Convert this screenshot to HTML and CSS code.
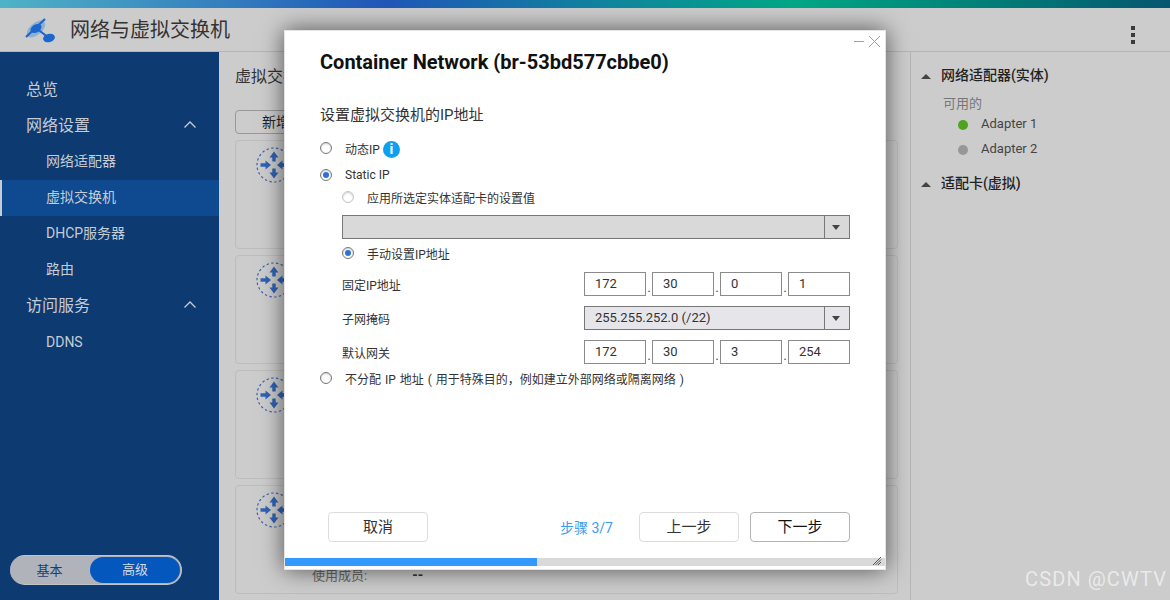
FILE: index.html
```html
<!DOCTYPE html>
<html lang="en">
<head>
  <meta charset="UTF-8">
  <title>网络与虚拟交换机</title>
  <link rel="stylesheet" href="styles.css">
</head>
<body>

  <div class="top-strip"></div>

  <header class="app-header">
    <svg class="app-logo" width="32" height="28" viewBox="0 0 32 28">
      <ellipse cx="13" cy="13" rx="11" ry="6" fill="#8fb0d0" transform="rotate(-40 13 13)"/>
      <path d="M3 21 L22 3" stroke="#1c66cc" stroke-width="2.2"/>
      <path d="M13 12 L26 22" stroke="#1c66cc" stroke-width="2.2"/>
      <ellipse cx="13" cy="12.5" rx="6" ry="4" fill="#1c66cc" transform="rotate(-30 13 12.5)"/>
      <ellipse cx="26" cy="22" rx="6" ry="4.2" fill="#1c66cc" transform="rotate(-15 26 22)"/>
    </svg>
    <div class="app-title">网络与虚拟交换机</div>
    <div class="kebab"><i></i><i></i><i></i></div>
  </header>

  <div class="app-body">
    <nav class="sidebar">
      <ul class="nav-list">
        <li class="nav-top">总览</li>
        <li class="nav-top">网络设置
          <svg class="chev" width="12" height="7" viewBox="0 0 12 7"><path d="M0.5 6.5 L6 1 L11.5 6.5" fill="none" stroke="#c6ccd6" stroke-width="1.3"/></svg>
        </li>
        <li class="nav-sub">网络适配器</li>
        <li class="nav-sub active">虚拟交换机</li>
        <li class="nav-sub">DHCP服务器</li>
        <li class="nav-sub">路由</li>
        <li class="nav-top">访问服务
          <svg class="chev" width="12" height="7" viewBox="0 0 12 7"><path d="M0.5 6.5 L6 1 L11.5 6.5" fill="none" stroke="#c6ccd6" stroke-width="1.3"/></svg>
        </li>
        <li class="nav-sub latin">DDNS</li>
      </ul>
      <div class="mode-switch">
        <span class="mode-item">基本</span>
        <span class="mode-item on">高级</span>
      </div>
    </nav>

    <main class="content">
      <div class="content-title">虚拟交换机</div>
      <div class="add-btn">新增</div>
      <div class="switch-card"><svg class="router-icon" viewBox="0 0 36 36"><use href="#router"/></svg></div>
      <div class="switch-card"><svg class="router-icon" viewBox="0 0 36 36"><use href="#router"/></svg></div>
      <div class="switch-card"><svg class="router-icon" viewBox="0 0 36 36"><use href="#router"/></svg></div>
      <div class="switch-card last">
        <svg class="router-icon" viewBox="0 0 36 36"><use href="#router"/></svg>
        <div class="member-row"><span>使用成员:</span><b>--</b></div>
      </div>
    </main>

    <aside class="side-panel">
      <div class="panel-head"><span class="tri"></span>网络适配器(实体)</div>
      <div class="panel-label">可用的</div>
      <div class="adapter"><span class="dot green"></span>Adapter 1</div>
      <div class="adapter"><span class="dot grey"></span>Adapter 2</div>
      <div class="panel-head second"><span class="tri"></span>适配卡(虚拟)</div>
    </aside>
  </div>

  <svg class="defs" width="0" height="0">
    <symbol id="router" viewBox="0 0 36 36">
      <circle cx="18" cy="18" r="17" fill="none" stroke="#3f62b4" stroke-width="1.2" stroke-dasharray="2.4 2.4"/>
      <path d="M18 4.5 L22.5 10.5 H19.7 V14.5 H16.3 V10.5 H13.5 Z M18 31.5 L22.5 25.5 H19.7 V21.5 H16.3 V25.5 H13.5 Z M15 18 L9.5 13.5 V16.3 H4.5 V19.7 H9.5 V22.5 Z M21 18 L26.5 13.5 V16.3 H31.5 V19.7 H26.5 V22.5 Z" fill="#2f63b5"/>
    </symbol>
  </svg>

  <!-- wizard window -->
  <div class="dialog">
    <div class="win-controls">
      <span class="win-min"></span>
      <svg width="13" height="13" viewBox="0 0 13 13"><path d="M1 1 L12 12 M12 1 L1 12" stroke="#a0a0a0" stroke-width="1"/></svg>
    </div>
    <h1 class="dlg-title">Container Network (br-53bd577cbbe0)</h1>
    <div class="dlg-sub">设置虚拟交换机的IP地址</div>

    <div class="form">
      <div class="radio-row r-dyn">
        <span class="radio"></span>
        <span>动态IP</span>
        <span class="info">i</span>
      </div>
      <div class="radio-row r-static">
        <span class="radio checked"></span>
        <span>Static IP</span>
      </div>
      <div class="nested">
        <div class="radio-row r-apply">
          <span class="radio disabled"></span>
          <span>应用所选定实体适配卡的设置值</span>
        </div>
        <div class="select disabled-select"><span class="select-val"></span><span class="select-arrow"></span></div>
        <div class="radio-row r-manual">
          <span class="radio checked"></span>
          <span>手动设置IP地址</span>
        </div>
        <div class="field-row">
          <label>固定IP地址</label>
          <div class="ip-group">
            <span class="ip-box">172</span><span class="ip-dot">.</span>
            <span class="ip-box">30</span><span class="ip-dot">.</span>
            <span class="ip-box">0</span><span class="ip-dot">.</span>
            <span class="ip-box">1</span>
          </div>
        </div>
        <div class="field-row">
          <label>子网掩码</label>
          <div class="select mask-select"><span class="select-val">255.255.252.0 (/22)</span><span class="select-arrow"></span></div>
        </div>
        <div class="field-row">
          <label>默认网关</label>
          <div class="ip-group">
            <span class="ip-box">172</span><span class="ip-dot">.</span>
            <span class="ip-box">30</span><span class="ip-dot">.</span>
            <span class="ip-box">3</span><span class="ip-dot">.</span>
            <span class="ip-box">254</span>
          </div>
        </div>
      </div>
      <div class="radio-row r-none">
        <span class="radio"></span>
        <span>不分配 IP 地址 ( 用于特殊目的，例如建立外部网络或隔离网络 )</span>
      </div>
    </div>

    <div class="dlg-footer">
      <div class="btn">取消</div>
      <div class="step">步骤 3/7</div>
      <div class="btn">上一步</div>
      <div class="btn primary">下一步</div>
    </div>

    <div class="progress">
      <div class="progress-fill" style="width: 42%"></div>
      <svg class="grip" width="10" height="10" viewBox="0 0 10 10"><path d="M9 1 L1 9 M9 3.5 L3.5 9 M9 6 L6 9" stroke="#555" stroke-width="1"/></svg>
    </div>
  </div>

  <div class="watermark">CSDN @CWTV</div>

</body>
</html>
```

FILE: styles.css
```css
* {
  box-sizing: border-box;
}
html, body {
  margin: 0;
  height: 600px;
  overflow: hidden;
}
body {
  font-family: Roboto, "Noto Sans CJK SC", sans-serif;
  background: #cccccc;
  color: #333;
  position: relative;
}
ul {
  list-style: none;
  margin: 0;
  padding: 0;
}

.top-strip {
  height: 8px;
  background: linear-gradient(90deg, #4fb3c7 0%, #2058b8 33%, #0f8a9c 54%, #00a886 68%, #007f78 84%, #05566f 100%);
}
.app-header {
  height: 44px;
  display: flex;
  align-items: center;
  border-bottom: 1px solid #b5b5b5;
  padding-left: 23px;
}
.app-logo {
  margin-right: 15px;
}
.app-title {
  font-size: 20px;
  color: #333;
  padding-bottom: 2px;
}
.kebab {
  margin-left: auto;
  margin-right: 35px;
  margin-top: 11px;
  display: flex;
  flex-direction: column;
  gap: 3px;
}
.kebab i {
  display: block;
  width: 4px;
  height: 4px;
  background: #3a3a3a;
}

.app-body {
  display: flex;
  height: 548px;
}

.sidebar {
  width: 219px;
  background: #0d3a70;
  color: #c6ccd6;
  padding-top: 20px;
  position: relative;
}
.nav-top {
  height: 36px;
  font-size: 16px;
  padding: 0 23px 4px 26px;
  display: flex;
  align-items: center;
  justify-content: space-between;
}
.nav-sub {
  height: 36px;
  font-size: 14px;
  padding: 0 0 5px 46px;
  display: flex;
  align-items: center;
}
.nav-sub.latin {
  padding-bottom: 0;
}
.nav-sub.active {
  background: #0f4a90;
  border-left: 2px solid #c6ccd6;
  padding-left: 44px;
}
.mode-switch {
  position: absolute;
  left: 10px;
  top: 503px;
  width: 172px;
  height: 30px;
  border-radius: 15px;
  background: #b0b3ba;
  border: 1px solid #c0c3c8;
  border-left: 0;
  display: flex;
  padding: 1px;
  font-size: 13px;
}
.mode-item {
  width: 79px;
  padding-right: 2px;
  text-align: center;
  line-height: 27px;
  color: #1d3d6b;
}
.mode-item.on {
  width: 90px;
  padding-right: 0;
  background: #0457bd;
  color: #d4dbe6;
  border-radius: 13px;
  line-height: 26px;
}

.content {
  flex: 1;
  padding: 14px 12px 0 16px;
  overflow: hidden;
}
.content-title {
  font-size: 16px;
  color: #333;
  line-height: 22px;
}
.add-btn {
  margin-top: 22px;
  width: 120px;
  height: 24px;
  border: 1px solid #999;
  border-radius: 4px;
  font-size: 14px;
  line-height: 22px;
  padding-left: 26px;
  color: #222;
}
.switch-card {
  height: 109px;
  margin-top: 6px;
  border: 1px solid #bdbdbd;
  border-radius: 4px;
  padding: 6px 0 0 20px;
  position: relative;
}
.router-icon {
  width: 36px;
  height: 36px;
  display: block;
}
.member-row {
  margin-top: 37px;
  margin-left: 56px;
  font-size: 13px;
  color: #666;
  display: flex;
  align-items: center;
  gap: 45px;
}
.member-row b {
  font-size: 14px;
  font-weight: 700;
  color: #333;
}

.side-panel {
  width: 260px;
  border-left: 1px solid #b5b5b5;
  padding: 12px 0 0 10px;
}
.panel-head {
  font-size: 14px;
  font-weight: 500;
  color: #222;
  display: flex;
  align-items: center;
  line-height: 22px;
}
.panel-head.second {
  margin-top: 11px;
}
.tri {
  width: 0;
  height: 0;
  border-left: 5px solid transparent;
  border-right: 5px solid transparent;
  border-bottom: 5px solid #444;
  margin: 3px 10px 0 0;
}
.panel-label {
  font-size: 13px;
  color: #777;
  margin: 8px 0 -3px 22px;
  line-height: 20px;
}
.adapter {
  font-size: 13px;
  color: #444;
  height: 25px;
  display: flex;
  align-items: center;
  margin-left: 37px;
}
.dot {
  width: 10px;
  height: 10px;
  border-radius: 50%;
  margin: 2px 13px 0 0;
}
.dot.green {
  background: #4ea31f;
}
.dot.grey {
  background: #979797;
}
.defs {
  position: absolute;
}

/* wizard window */
.dialog {
  position: absolute;
  left: 284px;
  top: 30px;
  width: 602px;
  height: 540px;
  background: #fff;
  border: 1px solid #e4e4e4;
  box-shadow: 0 0 22px rgba(0, 0, 0, 0.6);
  display: flex;
  flex-direction: column;
  padding: 0 35px;
}
.win-controls {
  position: absolute;
  right: 4px;
  top: 4px;
  display: flex;
  align-items: center;
  gap: 4px;
}
.win-min {
  width: 10px;
  height: 1px;
  background: #a0a0a0;
}
.dlg-title {
  margin: 18px 0 0;
  font-size: 20px;
  font-weight: 700;
  line-height: 26px;
  color: #111;
}
.dlg-sub {
  margin-top: 29px;
  font-size: 15px;
  line-height: 22px;
  color: #333;
}
.form {
  margin-top: 12px;
  font-size: 12px;
  color: #333;
}
.radio-row {
  display: flex;
  align-items: center;
  height: 20px;
}
.radio-row .radio {
  margin-right: 13px;
}
.r-static {
  margin-top: 7px;
}
.r-apply {
  margin-top: 2px;
}
.radio {
  width: 12px;
  height: 12px;
  border-radius: 50%;
  border: 1px solid #777;
  background: #fff;
  box-shadow: inset 0 1px 2px rgba(0, 0, 0, 0.2);
  flex: none;
  position: relative;
}
.radio.checked::after {
  content: "";
  position: absolute;
  left: 2px;
  top: 2px;
  width: 6px;
  height: 6px;
  border-radius: 50%;
  background: #2f6fd6;
}
.radio.disabled {
  border-color: #c4c4c4;
}
.info {
  width: 17px;
  height: 17px;
  border-radius: 50%;
  background: #0ea0f0;
  color: #fff;
  font-weight: 700;
  font-size: 14px;
  line-height: 17px;
  text-align: center;
  margin: 2px 0 0 3px;
}
.nested {
  padding-left: 22px;
}
.select {
  display: flex;
  width: 508px;
  height: 24px;
  border: 1px solid #777;
}
.disabled-select {
  margin-top: 8px;
  background: #d9d9d9;
}
.mask-select {
  width: 266px;
  background: #e6e6ea;
}
.select-val {
  flex: 1;
  padding-left: 10px;
  font-size: 13px;
  line-height: 22px;
}
.select-arrow {
  width: 25px;
  border-left: 1px solid #777;
  position: relative;
}
.select-arrow::after {
  content: "";
  position: absolute;
  left: 7px;
  top: 9px;
  border-left: 4px solid transparent;
  border-right: 4px solid transparent;
  border-top: 5px solid #444;
}
.r-manual {
  margin-top: 4px;
}
.field-row {
  display: flex;
  align-items: center;
  justify-content: space-between;
  width: 508px;
  height: 24px;
  margin-top: 10px;
}
.r-manual + .field-row {
  margin-top: 9px;
}
.field-row label {
  font-size: 12px;
}
.ip-group {
  display: flex;
  align-items: flex-end;
  width: 266px;
}
.ip-box {
  width: 62px;
  height: 24px;
  border: 1px solid #8a8a8a;
  padding-left: 10px;
  font-size: 13px;
  line-height: 22px;
  color: #333;
}
.ip-dot {
  width: 6px;
  text-align: center;
  font-size: 12px;
  line-height: 16px;
}
.r-none {
  margin-top: 4px;
  word-spacing: 1px;
}

.dlg-footer {
  position: absolute;
  left: 43px;
  right: 35px;
  top: 481px;
  display: flex;
  align-items: center;
}
.btn {
  width: 100px;
  height: 30px;
  border: 1px solid #ddd;
  border-radius: 4px;
  text-align: center;
  line-height: 28px;
  font-size: 15px;
  color: #333;
}
.btn.primary {
  border-color: #b4b4b4;
  color: #111;
  margin-left: 11px;
}
.step {
  margin-left: auto;
  margin-right: 26px;
  font-size: 14px;
  color: #3c9cf0;
}

.progress {
  position: absolute;
  left: 0;
  right: 0;
  bottom: 3px;
  height: 8px;
  background: #d9d9d9;
}
.progress-fill {
  height: 100%;
  background: #3399ff;
}
.grip {
  position: absolute;
  right: 3px;
  bottom: 0;
}

.watermark {
  position: absolute;
  right: 3px;
  bottom: 9px;
  font-size: 20px;
  color: rgba(255, 255, 255, 0.6);
  letter-spacing: 1.1px;
}
```
